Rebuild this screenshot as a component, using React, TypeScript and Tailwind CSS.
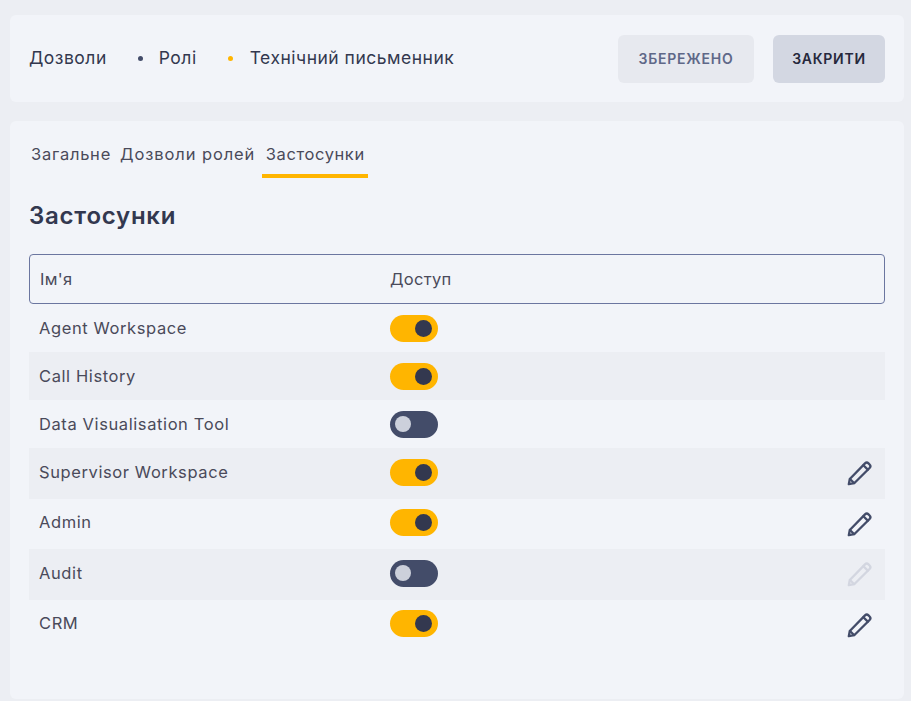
const font = "font-['Inter','Noto_Sans',sans-serif]";

function Toggle({ on }: { on: boolean }) {
  return (
    <div className={`flex h-[27px] w-12 items-center rounded-full ${on ? "justify-end bg-[#ffb500] pr-[6px]" : "justify-start bg-[#434c69] pl-[5px]"}`}>
      <div className={`rounded-full ${on ? "h-[17px] w-[17px] bg-[#33384f]" : "h-4 w-4 bg-[#ccd0db]"}`} />
    </div>
  );
}

function Pencil({ faded }: { faded?: boolean }) {
  return (
    <svg width="28" height="28" viewBox="0 0 28 28" fill="none" stroke={faded ? "#d3d6e0" : "#434c69"} strokeWidth="2.3" strokeLinejoin="round" strokeLinecap="round">
      <path d="M2.8 25.2l1-5.2L19 4.4a2.5 2.5 0 0 1 3.5 0l1.1 1.1a2.5 2.5 0 0 1 0 3.5L8.2 24.2z" />
      <path d="M17.4 6.2l4.4 4.4" />
      <path d="M4 20l4 4" />
    </svg>
  );
}

const rows = [
  { name: "Agent Workspace", on: true, h: "h-12", pencil: 0 },
  { name: "Call History", on: true, h: "h-12", pencil: 0, alt: true },
  { name: "Data Visualisation Tool", on: false, h: "h-12", pencil: 0 },
  { name: "Supervisor Workspace", on: true, h: "h-[51px] pb-[3px]", pencil: 1, alt: true },
  { name: "Admin", on: true, h: "h-[50px] pb-[3px]", pencil: 1 },
  { name: "Audit", on: false, h: "h-[51px] pb-[3px]", pencil: 2, alt: true },
  { name: "CRM", on: true, h: "h-[50px] pb-[3px]", pencil: 1 },
];

export default function App() {
  return (
    <div className={`${font} flex h-[701px] w-[911px] flex-col overflow-hidden bg-[#eceef3] pt-[15px] pr-[7px] pl-[10px] text-[#33384f]`}>
      <div className="flex h-[87px] items-center justify-between rounded-md bg-[#f2f4f9] px-[19px]">
        <div className="flex items-center text-[17.5px] tracking-[0.5px]">
          <span>Дозволи</span>
          <span className="mr-[16px] ml-[31px] h-[5px] w-[5px] rounded-full bg-[#434c69]" />
          <span>Ролі</span>
          <span className="mr-[17px] ml-[31px] h-[5px] w-[5px] rounded-full bg-[#ffb500]" />
          <span>Технічний письменник</span>
        </div>
        <div className="flex gap-[19px] text-[14px] font-semibold tracking-[0.75px]">
          <button className="h-12 w-[136px] rounded-md bg-[#e7e9ef] text-[#5f6888]">ЗБЕРЕЖЕНО</button>
          <button className="h-12 w-28 rounded-md bg-[#d3d7e2] text-[#26283c]">ЗАКРИТИ</button>
        </div>
      </div>

      <div className="mt-[19px] h-[578px] rounded-md bg-[#f2f4f9] px-[19px]">
        <div className="flex h-[57px] items-end text-[16.5px] leading-6 tracking-[0.6px] text-[#4a4a5a]">
          <div className="border-b-4 border-transparent pb-2 pl-[2px] tracking-[0.75px]">Загальне</div>
          <div className="ml-[9px] border-b-4 border-transparent pb-2 tracking-[0.9px]">Дозволи ролей</div>
          <div className="ml-[7px] flex w-[106px] justify-center border-b-4 border-[#ffb500] pb-2">Застосунки</div>
        </div>
        <h2 className="mt-[22px] text-[24px] leading-8 font-semibold tracking-[0.75px] text-[#33384f]">Застосунки</h2>
        <div className="mt-[22px] flex h-[50px] items-center rounded border border-[#6b76a0] pl-[10px] text-[16.5px] tracking-[0.3px] text-[#4a4a5a]">
          <div className="w-[350px]">Ім'я</div>
          <div>Доступ</div>
        </div>
        {rows.map((r) => (
          <div key={r.name} className={`flex items-center pr-[11px] pl-[10px] text-[16.5px] tracking-[0.6px] text-[#4a4a5a] ${r.h} ${r.alt ? "bg-[#eceef3]" : ""}`}>
            <div className="w-[351px]">{r.name}</div>
            <Toggle on={r.on} />
            <div className="ml-auto mt-[2px]">{r.pencil > 0 && <Pencil faded={r.pencil === 2} />}</div>
          </div>
        ))}
      </div>
    </div>
  );
}
